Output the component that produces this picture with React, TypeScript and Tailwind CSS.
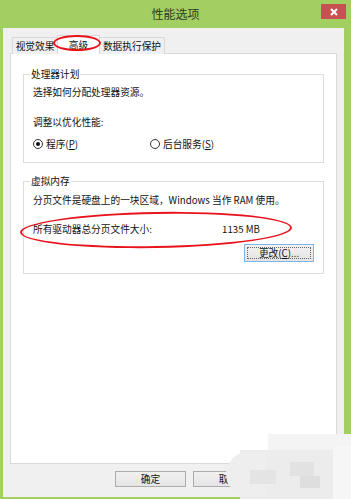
import { ReactNode } from "react";

const tabs = [
  { label: "视觉效果", width: "w-[46px]", active: false },
  { label: "高级", width: "w-[43px]", active: true },
  { label: "数据执行保护", width: "w-[66px]", active: false },
];

// blurred watermark cells, bottom-right corner
const mosaic = [
  { x: 268, y: 434, w: 83, h: 18, c: "bg-[#f4f4f4]" },
  { x: 240, y: 450, w: 111, h: 49, c: "bg-[#ececec]" },
  { x: 226, y: 452, w: 40, h: 44, c: "bg-[#eeeeee]" },
  { x: 290, y: 462, w: 24, h: 14, c: "bg-[#e2e2e2]" },
  { x: 300, y: 476, w: 20, h: 12, c: "bg-[#dedede]" },
  { x: 250, y: 470, w: 26, h: 14, c: "bg-[#e4e4e4]" },
  { x: 333, y: 446, w: 18, h: 53, c: "bg-[#f6f6f6]" },
];

export default function App() {
  return (
    <div className="relative flex h-[499px] w-[351px] flex-col overflow-hidden bg-[#a2cf62] font-['Noto_Sans_CJK_SC',sans-serif] text-[9.7px] leading-[16px] text-[#111]">
      <div className="grid h-[28px] grid-cols-[1fr_auto_1fr]">
        <div />
        <div className="pt-[6px] text-[12px] leading-[16px] text-[#2e3b22]">性能选项</div>
        <div className="flex justify-end pr-[5px] pt-[4px]">
          <div className="flex h-[15px] w-[25px] items-center justify-center bg-[#c75050]">
            <svg width="8" height="8" viewBox="0 0 8 8">
              <path d="M1 1L7 7M7 1L1 7" stroke="#fff" strokeWidth="2" />
            </svg>
          </div>
        </div>
      </div>

      <div className="mb-[2px] ml-[3px] mr-[7px] flex flex-1 flex-col bg-[#f0f0f0] px-[7px] pt-[7px] pb-[10px]">
        <div className="relative -mb-px flex h-[19px] items-end pl-[2px]">
          {tabs.map((t) =>
            t.active ? (
              <div
                key={t.label}
                className={`relative z-10 -mx-px flex h-[19px] ${t.width} justify-center border-x border-t border-[#d9d9d9] bg-white pt-[1px]`}
              >
                {t.label}
              </div>
            ) : (
              <div
                key={t.label}
                className={`flex h-[17px] ${t.width} justify-center border-x border-t border-[#d9d9d9] bg-[#f0f0f0]`}
              >
                {t.label}
              </div>
            ),
          )}
        </div>

        <div className="flex flex-1 flex-col border border-[#d9d9d9] bg-white px-[12px] pt-[20px]">
          <GroupBox title="处理器计划" className="pl-[9px] pt-[9px] pb-[10px]">
            <p>选择如何分配处理器资源。</p>
            <p className="mt-[14px]">调整以优化性能:</p>
            <div className="mt-[6px] flex items-center">
              <div className="flex w-[117px] items-center gap-[3px]">
                <Radio checked />
                <span>
                  程序(<span className="underline">P</span>)
                </span>
              </div>
              <div className="flex items-center gap-[3px]">
                <Radio />
                <span>
                  后台服务(<span className="underline">S</span>)
                </span>
              </div>
            </div>
          </GroupBox>

          <GroupBox title="虚拟内存" className="mt-[18px] pl-[9px] pr-[9px] pt-[10px] pb-[11px]">
            <p>分页文件是硬盘上的一块区域，Windows 当作 RAM 使用。</p>
            <div className="mt-[13px] flex">
              <span className="w-[189px]">所有驱动器总分页文件大小:</span>
              <span>1135 MB</span>
            </div>
            <div className="mt-[7px] flex justify-end">
              <div className="flex h-[18px] w-[70px] border border-[#7eb4ea] bg-gradient-to-b from-[#f2f2f2] to-[#e4e4e4] p-[2px]">
                <div className="flex flex-1 items-center justify-center border border-dotted border-[#666] leading-[12px]">
                  <span className="whitespace-nowrap">
                    更改(<span className="underline">C</span>)...
                  </span>
                </div>
              </div>
            </div>
          </GroupBox>
        </div>

        <div className="mt-[7px] flex gap-[7px] pl-[105px]">
          <DialogButton>确定</DialogButton>
          <DialogButton>取消</DialogButton>
        </div>
      </div>

      {mosaic.map((m, i) => (
        <div
          key={i}
          className={`absolute z-20 ${m.c} ${i === 2 ? "rounded-l-[22px]" : ""}`}
          style={{ left: m.x, top: m.y, width: m.w, height: m.h }}
        />
      ))}

      {/* annotation ellipses */}
      <div className="absolute left-[53px] top-[35px] z-30 h-[16px] w-[48px] rounded-[50%] border-2 border-[#e8141b]" />
      <div className="absolute left-[20px] top-[212px] z-30 h-[36px] w-[272px] rotate-[-1deg] rounded-[50%] border-2 border-[#e8141b]" />
    </div>
  );
}

function GroupBox({ title, className, children }: { title: string; className?: string; children: ReactNode }) {
  return (
    <div className={`relative border border-[#dcdcdc] ${className ?? ""}`}>
      <span className="absolute left-[6px] top-[-9px] bg-white px-[1px]">{title}</span>
      {children}
    </div>
  );
}

function Radio({ checked }: { checked?: boolean }) {
  return (
    <span className="flex size-[10px] items-center justify-center rounded-full border border-[#333] bg-white">
      {checked && <span className="size-[4px] rounded-full bg-[#111]" />}
    </span>
  );
}

function DialogButton({ children }: { children: ReactNode }) {
  return (
    <div className="flex h-[16px] w-[71px] items-center justify-center border border-[#acacac] bg-gradient-to-b from-[#f0f0f0] to-[#e5e5e5]">
      {children}
    </div>
  );
}
